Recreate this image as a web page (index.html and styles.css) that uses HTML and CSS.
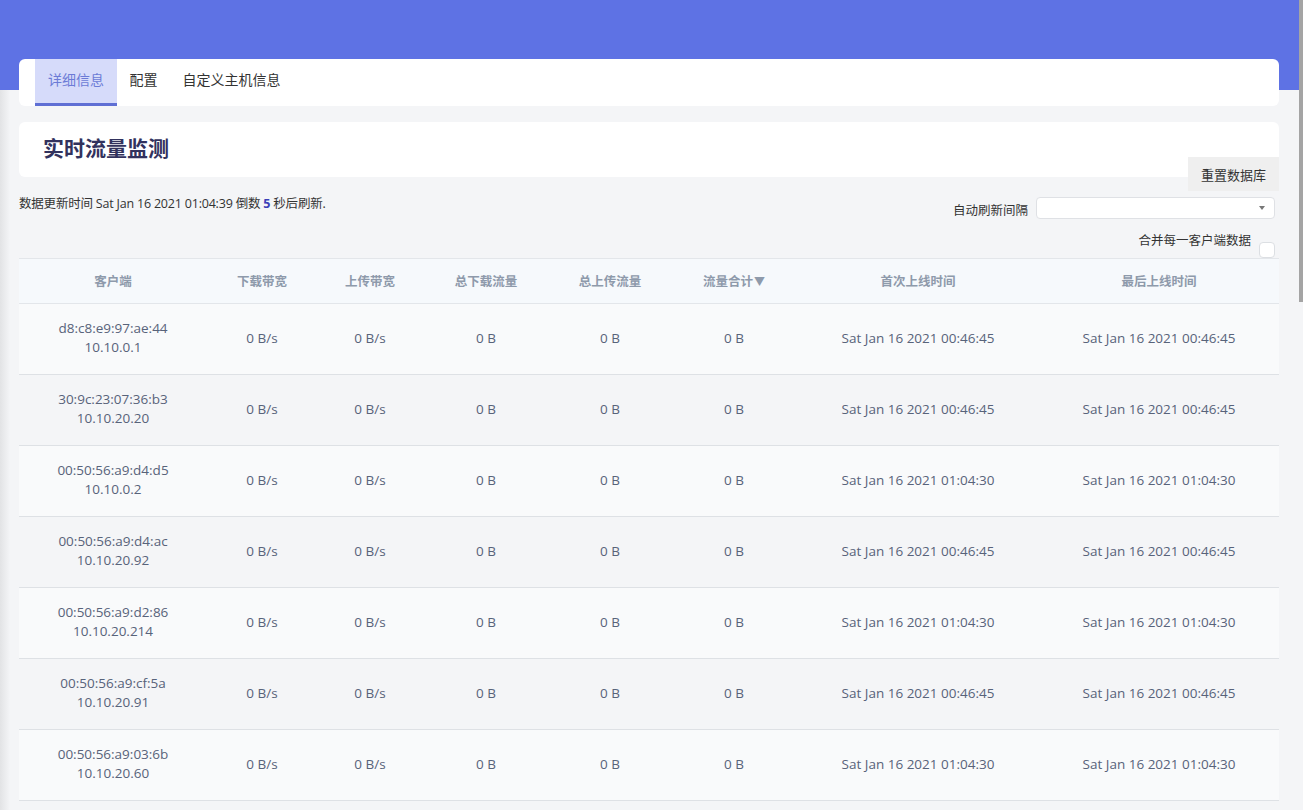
FILE: index.html
```html
<!DOCTYPE html>
<html lang="zh-CN">
<head>
<meta charset="utf-8">
<title>实时流量监测</title>
<link rel="stylesheet" href="styles.css">
</head>
<body>
<div class="scroll-thumb"></div>
<div class="page">
  <nav class="tabs-card">
    <a class="tab active">详细信息</a>
    <a class="tab">配置</a>
    <a class="tab">自定义主机信息</a>
  </nav>
  <div class="title-card"><h2>实时流量监测</h2></div>
  <div class="reset-row"><button class="btn-reset">重置数据库</button></div>
  <div class="toolbar">
    <div class="status">数据更新时间 Sat Jan 16 2021 01:04:39 倒数 <b>5</b> 秒后刷新.</div>
    <div class="controls">
      <label class="ctl-row"><span>自动刷新间隔</span><span class="select"><span class="caret"></span></span></label>
      <label class="ctl-row merge"><span>合并每一客户端数据</span><span class="checkbox"></span></label>
    </div>
  </div>
  <table class="traffic">
    <colgroup>
      <col class="c1"><col class="c2"><col class="c3"><col class="c4"><col class="c5"><col class="c6"><col class="c7"><col class="c8">
    </colgroup>
    <thead>
      <tr><th>客户端</th><th>下载带宽</th><th>上传带宽</th><th>总下载流量</th><th>总上传流量</th><th>流量合计<span class="sort">▼</span></th><th>首次上线时间</th><th>最后上线时间</th></tr>
    </thead>
    <tbody>
      <tr><td>d8:c8:e9:97:ae:44<br>10.10.0.1</td><td>0 B/s</td><td>0 B/s</td><td>0 B</td><td>0 B</td><td>0 B</td><td>Sat Jan 16 2021 00:46:45</td><td>Sat Jan 16 2021 00:46:45</td></tr>
      <tr><td>30:9c:23:07:36:b3<br>10.10.20.20</td><td>0 B/s</td><td>0 B/s</td><td>0 B</td><td>0 B</td><td>0 B</td><td>Sat Jan 16 2021 00:46:45</td><td>Sat Jan 16 2021 00:46:45</td></tr>
      <tr><td>00:50:56:a9:d4:d5<br>10.10.0.2</td><td>0 B/s</td><td>0 B/s</td><td>0 B</td><td>0 B</td><td>0 B</td><td>Sat Jan 16 2021 01:04:30</td><td>Sat Jan 16 2021 01:04:30</td></tr>
      <tr><td>00:50:56:a9:d4:ac<br>10.10.20.92</td><td>0 B/s</td><td>0 B/s</td><td>0 B</td><td>0 B</td><td>0 B</td><td>Sat Jan 16 2021 00:46:45</td><td>Sat Jan 16 2021 00:46:45</td></tr>
      <tr><td>00:50:56:a9:d2:86<br>10.10.20.214</td><td>0 B/s</td><td>0 B/s</td><td>0 B</td><td>0 B</td><td>0 B</td><td>Sat Jan 16 2021 01:04:30</td><td>Sat Jan 16 2021 01:04:30</td></tr>
      <tr><td>00:50:56:a9:cf:5a<br>10.10.20.91</td><td>0 B/s</td><td>0 B/s</td><td>0 B</td><td>0 B</td><td>0 B</td><td>Sat Jan 16 2021 00:46:45</td><td>Sat Jan 16 2021 00:46:45</td></tr>
      <tr><td>00:50:56:a9:03:6b<br>10.10.20.60</td><td>0 B/s</td><td>0 B/s</td><td>0 B</td><td>0 B</td><td>0 B</td><td>Sat Jan 16 2021 01:04:30</td><td>Sat Jan 16 2021 01:04:30</td></tr>
      <tr><td>00:50:56:a9:5e:12<br>10.10.20.33</td><td>0 B/s</td><td>0 B/s</td><td>0 B</td><td>0 B</td><td>0 B</td><td>Sat Jan 16 2021 00:46:45</td><td>Sat Jan 16 2021 00:46:45</td></tr>
      <tr><td>00:50:56:a9:7b:40<br>10.10.20.45</td><td>0 B/s</td><td>0 B/s</td><td>0 B</td><td>0 B</td><td>0 B</td><td>Sat Jan 16 2021 01:04:30</td><td>Sat Jan 16 2021 01:04:30</td></tr>
      <tr><td>00:50:56:a9:1c:e8<br>10.10.20.101</td><td>0 B/s</td><td>0 B/s</td><td>0 B</td><td>0 B</td><td>0 B</td><td>Sat Jan 16 2021 00:46:45</td><td>Sat Jan 16 2021 00:46:45</td></tr>
      <tr><td>00:50:56:a9:88:0f<br>10.10.20.102</td><td>0 B/s</td><td>0 B/s</td><td>0 B</td><td>0 B</td><td>0 B</td><td>Sat Jan 16 2021 01:04:30</td><td>Sat Jan 16 2021 01:04:30</td></tr>
      <tr><td>00:50:56:a9:b2:7d<br>10.10.20.115</td><td>0 B/s</td><td>0 B/s</td><td>0 B</td><td>0 B</td><td>0 B</td><td>Sat Jan 16 2021 00:46:45</td><td>Sat Jan 16 2021 00:46:45</td></tr>
      <tr><td>00:50:56:a9:49:a3<br>10.10.20.120</td><td>0 B/s</td><td>0 B/s</td><td>0 B</td><td>0 B</td><td>0 B</td><td>Sat Jan 16 2021 01:04:30</td><td>Sat Jan 16 2021 01:04:30</td></tr>
      <tr><td>00:50:56:a9:e0:56<br>10.10.20.131</td><td>0 B/s</td><td>0 B/s</td><td>0 B</td><td>0 B</td><td>0 B</td><td>Sat Jan 16 2021 00:46:45</td><td>Sat Jan 16 2021 00:46:45</td></tr>
      <tr><td>00:50:56:a9:2d:91<br>10.10.20.140</td><td>0 B/s</td><td>0 B/s</td><td>0 B</td><td>0 B</td><td>0 B</td><td>Sat Jan 16 2021 01:04:30</td><td>Sat Jan 16 2021 01:04:30</td></tr>
      <tr><td>00:50:56:a9:f3:0c<br>10.10.20.152</td><td>0 B/s</td><td>0 B/s</td><td>0 B</td><td>0 B</td><td>0 B</td><td>Sat Jan 16 2021 00:46:45</td><td>Sat Jan 16 2021 00:46:45</td></tr>
      <tr><td>00:50:56:a9:64:b8<br>10.10.20.163</td><td>0 B/s</td><td>0 B/s</td><td>0 B</td><td>0 B</td><td>0 B</td><td>Sat Jan 16 2021 01:04:30</td><td>Sat Jan 16 2021 01:04:30</td></tr>
      <tr><td>00:50:56:a9:a7:2e<br>10.10.20.177</td><td>0 B/s</td><td>0 B/s</td><td>0 B</td><td>0 B</td><td>0 B</td><td>Sat Jan 16 2021 00:46:45</td><td>Sat Jan 16 2021 00:46:45</td></tr>
      <tr><td>00:50:56:a9:3f:d4<br>10.10.20.188</td><td>0 B/s</td><td>0 B/s</td><td>0 B</td><td>0 B</td><td>0 B</td><td>Sat Jan 16 2021 01:04:30</td><td>Sat Jan 16 2021 01:04:30</td></tr>
      <tr><td>00:50:56:a9:c1:69<br>10.10.20.193</td><td>0 B/s</td><td>0 B/s</td><td>0 B</td><td>0 B</td><td>0 B</td><td>Sat Jan 16 2021 00:46:45</td><td>Sat Jan 16 2021 00:46:45</td></tr>
      <tr><td>00:50:56:a9:0a:b5<br>10.10.20.201</td><td>0 B/s</td><td>0 B/s</td><td>0 B</td><td>0 B</td><td>0 B</td><td>Sat Jan 16 2021 01:04:30</td><td>Sat Jan 16 2021 01:04:30</td></tr>
      <tr><td>00:50:56:a9:95:7c<br>10.10.20.222</td><td>0 B/s</td><td>0 B/s</td><td>0 B</td><td>0 B</td><td>0 B</td><td>Sat Jan 16 2021 00:46:45</td><td>Sat Jan 16 2021 00:46:45</td></tr>
      <tr><td>00:50:56:a9:d8:21<br>10.10.20.230</td><td>0 B/s</td><td>0 B/s</td><td>0 B</td><td>0 B</td><td>0 B</td><td>Sat Jan 16 2021 01:04:30</td><td>Sat Jan 16 2021 01:04:30</td></tr>
      <tr><td>00:50:56:a9:6e:9a<br>10.10.20.241</td><td>0 B/s</td><td>0 B/s</td><td>0 B</td><td>0 B</td><td>0 B</td><td>Sat Jan 16 2021 00:46:45</td><td>Sat Jan 16 2021 00:46:45</td></tr>
      <tr><td>00:50:56:a9:14:f7<br>10.10.20.250</td><td>0 B/s</td><td>0 B/s</td><td>0 B</td><td>0 B</td><td>0 B</td><td>Sat Jan 16 2021 01:04:30</td><td>Sat Jan 16 2021 01:04:30</td></tr>
      <tr><td>00:50:56:a9:b9:3d<br>10.10.20.253</td><td>0 B/s</td><td>0 B/s</td><td>0 B</td><td>0 B</td><td>0 B</td><td>Sat Jan 16 2021 00:46:45</td><td>Sat Jan 16 2021 00:46:45</td></tr>
    </tbody>
  </table>
</div>
</body>
</html>
```
FILE: styles.css
```css
html {
  background:
    linear-gradient(#5e72e4, #5e72e4) 0 0 / 100% 90px no-repeat,
    linear-gradient(to right, #e2e3e5 0, #f4f5f7 10px) 0 0 / 100% 100% no-repeat,
    #f4f5f7;
}
::-webkit-scrollbar { width: 0; }

body {
  margin: 0;
  font-family: "Open Sans", "Noto Sans CJK SC", sans-serif;
  color: #525f7f;
}
.scroll-thumb {
  position: fixed;
  top: 0;
  right: 0;
  width: 4px;
  height: 302px;
  background: #a4a4a4;
  z-index: 10;
}
.page {
  padding: 59px 24px 20px 19px;
}
.tabs-card {
  display: flex;
  height: 47px;
  padding-left: 16px;
  background: #fff;
  border-radius: 6px;
}
.tab {
  display: flex;
  align-items: center;
  padding: 0 12.5px 5px;
  font-family: "Noto Sans CJK SC", sans-serif;
  font-size: 14px;
  color: #333;
  border-bottom: 3px solid transparent;
  cursor: pointer;
}
.tab.active {
  padding: 0 13px 5px;
  background: #d6dbfa;
  color: #6c7bd6;
  border-bottom-color: #5f6fd4;
}
.title-card {
  margin-top: 16px;
  height: 55px;
  display: flex;
  align-items: center;
  padding-left: 24px;
  padding-bottom: 5px;
  box-sizing: border-box;
  background: #fff;
  border-radius: 6px;
  margin-bottom: -20px;
}
.title-card h2 {
  margin: 0;
  font-family: "Noto Sans CJK SC", sans-serif;
  font-size: 21px;
  font-weight: 700;
  color: #32325d;
}
.reset-row {
  display: flex;
  justify-content: flex-end;
}
.btn-reset {
  height: 34px;
  padding: 0 13px;
  border: 0;
  background: #efefef;
  font-family: "Noto Sans CJK SC", sans-serif;
  font-size: 13px;
  color: #333;
}
.toolbar {
  display: flex;
  justify-content: space-between;
  align-items: flex-start;
  padding-top: 6px;
}
.status {
  font-family: "Open Sans", "Noto Sans CJK SC", sans-serif;
  font-size: 12.5px;
  color: #333;
  line-height: 14px;
  letter-spacing: -0.2px;
}
.status b { color: #3b3fb8; }
.controls {
  display: flex;
  flex-direction: column;
  align-items: flex-end;
  padding-right: 4px;
}
.ctl-row {
  display: flex;
  align-items: flex-end;
  font-family: "Noto Sans CJK SC", sans-serif;
  font-size: 12.5px;
  color: #333;
}
.select {
  position: relative;
  display: block;
  width: 237px;
  height: 20px;
  margin-left: 8px;
  background: #fff;
  border: 1px solid #dfe1e5;
  border-radius: 4px;
}
.caret {
  position: absolute;
  right: 9px;
  top: 8px;
  border-left: 3.5px solid transparent;
  border-right: 3.5px solid transparent;
  border-top: 4px solid #777;
}
.merge {
  margin-top: 13px;
  align-items: flex-start;
}
.merge span:first-child { line-height: 16px; }
.checkbox {
  display: block;
  width: 14px;
  height: 14px;
  margin: 10px 0 0 8px;
  background: #fff;
  border: 1px solid #dcdfe3;
  border-radius: 4px;
}
.traffic {
  width: 100%;
  border-collapse: collapse;
  table-layout: fixed;
  margin-top: 0;
}
.c1 { width: 188px; }
.c2 { width: 110px; }
.c3 { width: 106px; }
.c4 { width: 126px; }
.c5 { width: 122px; }
.c6 { width: 126px; }
.c7 { width: 242px; }
.c8 { width: 240px; }
.traffic th {
  height: 42px;
  padding: 0 0 2px;
  background: #f6f9fc;
  border-top: 1px solid #e3e6ea;
  border-bottom: 1px solid #e3e6ea;
  font-family: "Noto Sans CJK SC", sans-serif;
  font-size: 12.5px;
  font-weight: 700;
  color: #8e9aab;
  text-align: center;
}
.sort { font-size: 11px; margin-left: 1px; }
.traffic td {
  height: 68px;
  padding: 0 0 2px;
  border-bottom: 1px solid #dee1e5;
  font-size: 13.5px;
  line-height: 19px;
  color: #58637a;
  text-align: center;
}
.traffic tbody tr:nth-child(odd) td { background: #f9fafb; }
.traffic tbody tr:nth-child(even) td { background: #f4f5f7; }
```
